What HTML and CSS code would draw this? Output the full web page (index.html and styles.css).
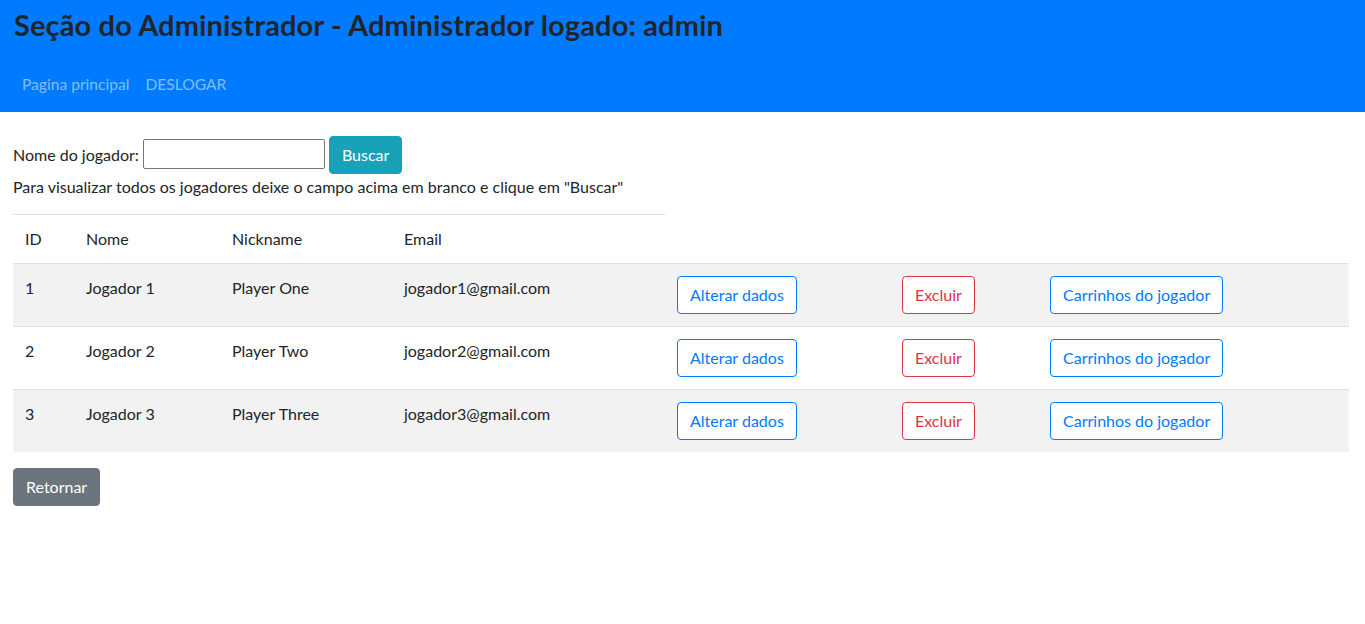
FILE: index.html
```html
<!DOCTYPE html>
<html lang="pt-BR">
<head>
<meta charset="utf-8">
<title>Seção do Administrador</title>
<link rel="stylesheet" href="styles.css">
</head>
<body>
<header class="topbar">
  <h1 class="title">Seção do Administrador - Administrador logado: admin</h1>
  <nav class="nav">
    <a class="nav-link" href="#">Pagina principal</a>
    <a class="nav-link" href="#">DESLOGAR</a>
  </nav>
</header>
<main class="content">
  <form class="search">
    <label class="search-label" for="nome">Nome do jogador:</label>
    <input class="search-input" id="nome" type="text">
    <button class="btn btn-info" type="button">Buscar</button>
  </form>
  <p class="hint">Para visualizar todos os jogadores deixe o campo acima em branco e clique em "Buscar"</p>
  <table class="players">
    <colgroup>
      <col class="c-id"><col class="c-nome"><col class="c-nick"><col class="c-email"><col class="c-alt"><col class="c-exc"><col class="c-car">
    </colgroup>
    <thead>
      <tr><th>ID</th><th>Nome</th><th>Nickname</th><th>Email</th></tr>
    </thead>
    <tbody>
      <tr class="striped">
        <td>1</td><td>Jogador 1</td><td>Player One</td><td>jogador1@gmail.com</td>
        <td><button class="btn btn-outline-primary" type="button">Alterar dados</button></td>
        <td><button class="btn btn-outline-danger" type="button">Excluir</button></td>
        <td><button class="btn btn-outline-primary" type="button">Carrinhos do jogador</button></td>
      </tr>
      <tr>
        <td>2</td><td>Jogador 2</td><td>Player Two</td><td>jogador2@gmail.com</td>
        <td><button class="btn btn-outline-primary" type="button">Alterar dados</button></td>
        <td><button class="btn btn-outline-danger" type="button">Excluir</button></td>
        <td><button class="btn btn-outline-primary" type="button">Carrinhos do jogador</button></td>
      </tr>
      <tr class="striped">
        <td>3</td><td>Jogador 3</td><td>Player Three</td><td>jogador3@gmail.com</td>
        <td><button class="btn btn-outline-primary" type="button">Alterar dados</button></td>
        <td><button class="btn btn-outline-danger" type="button">Excluir</button></td>
        <td><button class="btn btn-outline-primary" type="button">Carrinhos do jogador</button></td>
      </tr>
    </tbody>
  </table>
  <button class="btn btn-secondary" type="button">Retornar</button>
</main>
</body>
</html>
```
FILE: styles.css
```css
* { box-sizing: border-box; }
html, body { margin: 0; padding: 0; }
body {
  font-family: "Lato", "Open Sans", sans-serif;
  font-weight: 400;
  font-size: 16px;
  line-height: 24px;
  color: #212529;
  background: #fff;
}
.topbar {
  background: #007bff;
  height: 112px;
  padding: 8px 14px 0 14px;
}
.title {
  margin: 0;
  font-size: 29px;
  line-height: 34px;
  font-weight: 700;
  letter-spacing: 0.13px;
  color: #212529;
}
.nav {
  display: flex;
  margin-top: 30px;
}
.nav-link {
  display: block;
  padding: 0 8px;
  line-height: 24px;
  color: rgba(255, 255, 255, 0.5);
  text-decoration: none;
  font-size: 15.6px;
}
.content {
  padding: 24px 13px 0 13px;
}
.search {
  display: flex;
  align-items: center;
  margin: 0;
}
.search-label { margin-right: 4px; }
.search-input {
  width: 182px;
  height: 30px;
  border: 1px solid #767676;
  border-radius: 2px;
  margin: 0 4px 3px 0;
  font: inherit;
}
.hint {
  margin: 1px 0 15px 0;
}
.btn {
  display: inline-block;
  font-family: inherit;
  font-size: 16px;
  line-height: 24px;
  padding: 6px 12px;
  border: 1px solid transparent;
  border-radius: 4px;
  background: transparent;
  cursor: pointer;
}
.btn-info { background: #17a2b8; border-color: #17a2b8; color: #fff; }
.btn-secondary { background: #6c757d; border-color: #6c757d; color: #fff; }
.btn-outline-primary { color: #007bff; border-color: #007bff; background: #fff; }
.btn-outline-danger { color: #dc3545; border-color: #dc3545; background: #fff; }
.players {
  width: 1336px;
  border-collapse: collapse;
  table-layout: fixed;
  margin-bottom: 16px;
}
.c-id { width: 61px; }
.c-nome { width: 146px; }
.c-nick { width: 172px; }
.c-email { width: 273px; }
.c-alt { width: 225px; }
.c-exc { width: 148px; }
.c-car { width: 311px; }
.players th, .players td {
  padding: 12px;
  text-align: left;
  vertical-align: top;
  border-top: 1px solid #dee2e6;
  font-weight: 400;
}
.players tr.striped td { background: #f2f2f2; }
```
